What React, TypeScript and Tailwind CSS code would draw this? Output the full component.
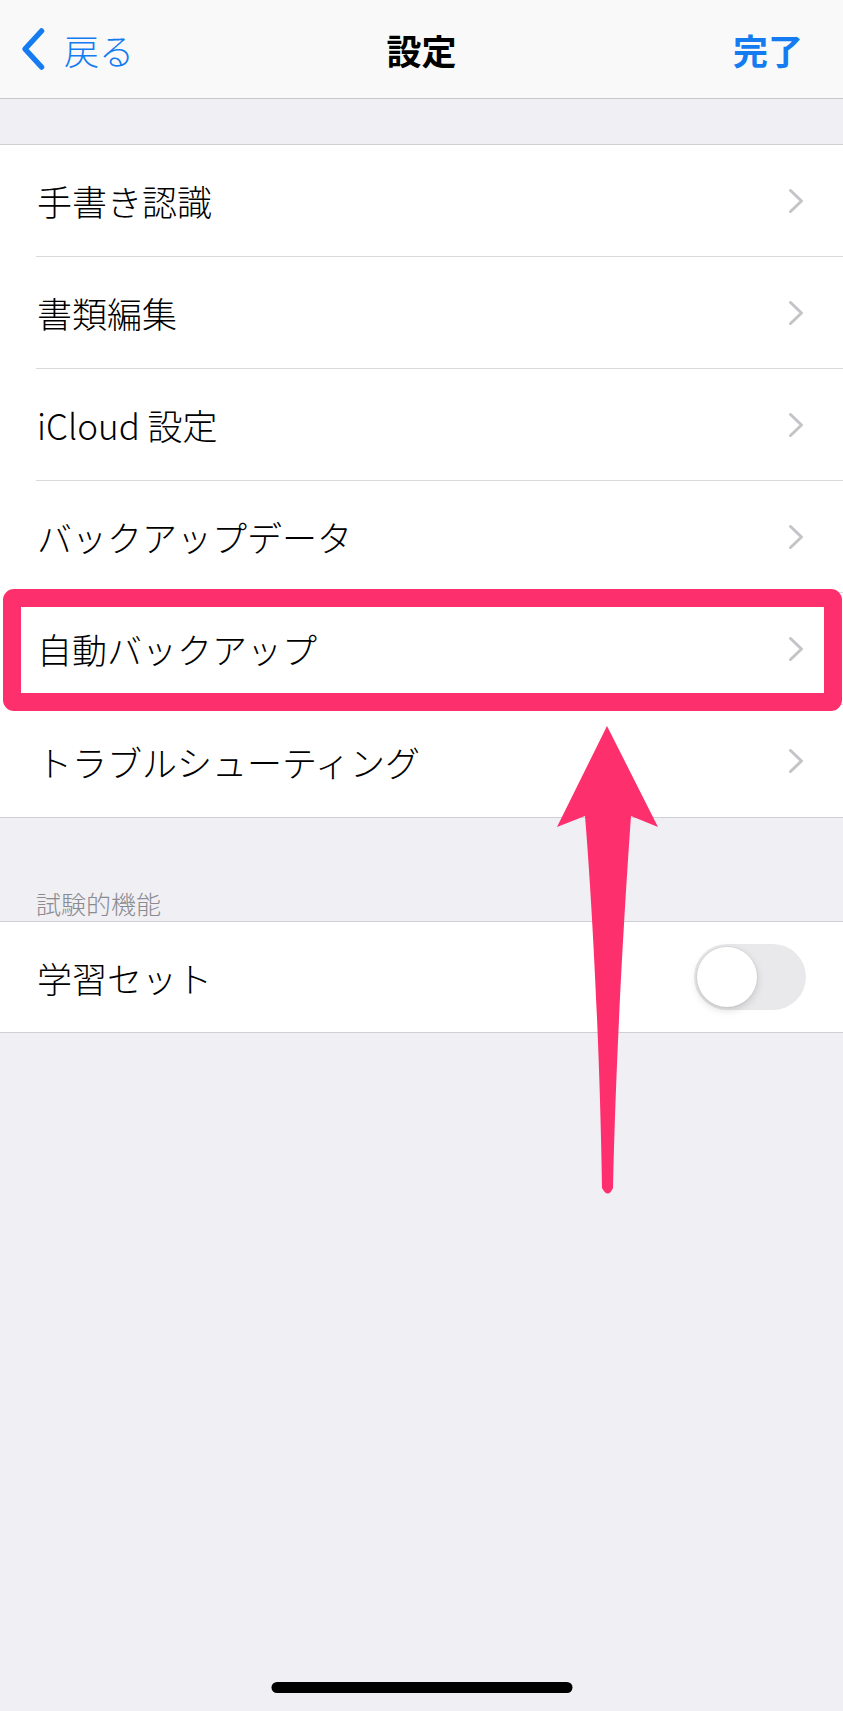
import React from "react";

const rows = [
  "手書き認識",
  "書類編集",
  "iCloud 設定",
  "バックアップデータ",
  "自動バックアップ",
  "トラブルシューティング",
];

function Disclosure() {
  return (
    <svg width="16" height="26" viewBox="0 0 16 26" fill="none">
      <path d="M2.5 2.5 L13.5 13 L2.5 23.5" stroke="#c4c4c8" strokeWidth="3" strokeLinecap="round" strokeLinejoin="round" />
    </svg>
  );
}

function Row({ label, last }: { label: string; last?: boolean }) {
  return (
    <div className="bg-white pl-[36px]">
      <div
        className={`flex h-[112px] items-center justify-between pr-[39px] ${
          last ? "" : "border-b border-[#d9d9dd]"
        }`}
      >
        <span className="pl-[1px] text-[35px] font-light leading-none text-black">{label}</span>
        <Disclosure />
      </div>
    </div>
  );
}

function Toggle() {
  return (
    <div className="relative h-[66px] w-[112px] rounded-full bg-[#e9e9eb]">
      <div className="absolute left-[3px] top-[3px] h-[60px] w-[60px] rounded-full bg-white shadow-[0_3px_8px_rgba(0,0,0,0.15),0_0_0_1px_rgba(0,0,0,0.04)]" />
    </div>
  );
}

export default function App() {
  return (
    <div className="relative min-h-[1711px] w-full overflow-hidden bg-[#efeff4] font-['Noto_Sans_CJK_JP','Noto_Sans',sans-serif]">
      {/* Nav bar */}
      <div className="grid h-[99px] grid-cols-3 items-center border-b border-[#c8c8cc] bg-[#f9f9fa]">
        <div className="flex items-center pl-[20px]">
          <svg width="26" height="44" viewBox="0 0 26 44" fill="none">
            <path d="M21.5 4 L5 22 L21.5 40" stroke="#147cf0" strokeWidth="5.5" strokeLinecap="round" strokeLinejoin="round" />
          </svg>
          <span className="ml-[18px] text-[35px] font-light leading-none text-[#147cf0]">戻る</span>
        </div>
        <div className="text-center text-[35px] font-bold leading-none text-black">設定</div>
        <div className="flex justify-end pr-[40px]">
          <span className="text-[35px] font-bold leading-none text-[#147cf0]">完了</span>
        </div>
      </div>

      <div className="h-[45px]" />

      {/* Main group */}
      <div className="border-y border-[#cfcfd4]">
        {rows.map((r, i) => (
          <Row key={r} label={r} last={i === rows.length - 1} />
        ))}
      </div>

      {/* Section header */}
      <div className="flex h-[103px] items-end pb-[6px] pl-[36px]">
        <span className="text-[25px] font-light leading-[24px] text-[#8a8a8f]">試験的機能</span>
      </div>

      {/* Experimental group */}
      <div className="border-y border-[#cfcfd4] bg-white">
        <div className="flex h-[110px] items-center justify-between pl-[37px] pr-[37px]">
          <span className="text-[35px] font-light leading-none text-black">学習セット</span>
          <Toggle />
        </div>
      </div>

      {/* Highlight box */}
      <div className="pointer-events-none absolute left-[3px] top-[589px] h-[122px] w-[839px] rounded-[11px] border-[18px] border-[#fd2f6d]" />

      {/* Arrow */}
      <svg
        className="pointer-events-none absolute left-[550px] top-[720px]"
        width="120"
        height="480"
        viewBox="550 720 120 480"
      >
        <path
          d="M607 726 L658 827 L631 816 C 625 900 616 1050 613 1188 Q 608 1199 602 1188 C 600 1050 592 900 585 816 L557 827 Z"
          fill="#fd2f6d"
        />
      </svg>

      {/* Home indicator */}
      <div className="absolute bottom-[18px] left-1/2 h-[11px] w-[301px] -translate-x-1/2 rounded-full bg-black" />
    </div>
  );
}
